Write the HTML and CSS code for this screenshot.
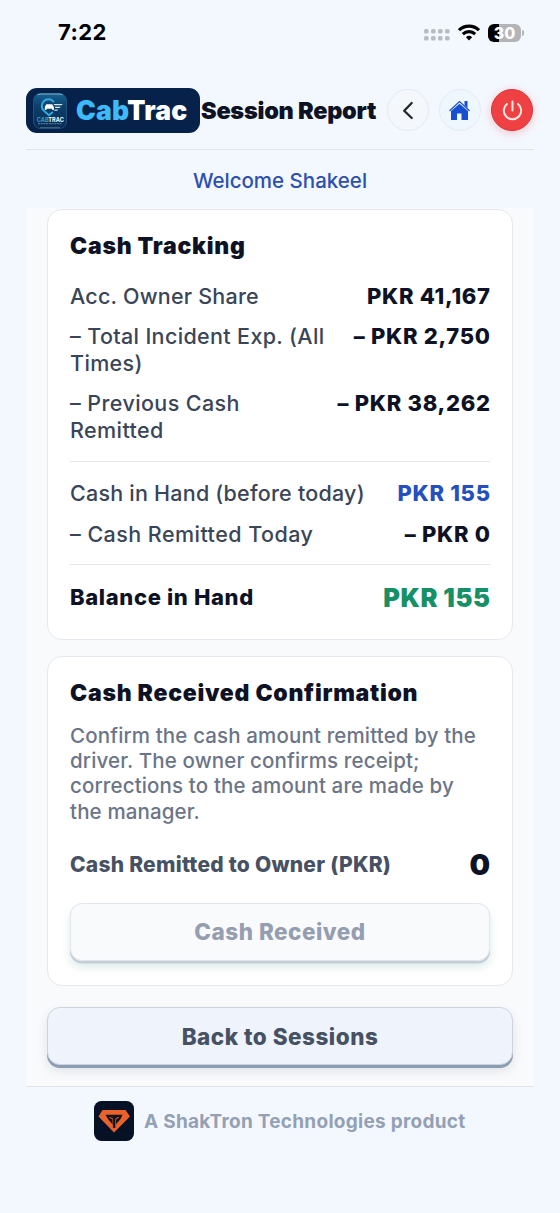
FILE: index.html
```html
<!DOCTYPE html>
<html lang="en">
<head>
<meta charset="utf-8">
<meta name="viewport" content="width=device-width, initial-scale=1">
<title>Session Report</title>
<link rel="stylesheet" href="styles.css">
</head>
<body>
<div class="status">
  <span class="clock">7:22</span>
  <div class="indicators">
    <svg class="dots" width="26" height="13" viewBox="0 0 26 13" fill="#b8bcc1"><rect x="0" y="0" width="4.6" height="4.6" rx="1.6"/><rect x="7" y="0" width="4.6" height="4.6" rx="1.6"/><rect x="14" y="0" width="4.6" height="4.6" rx="1.6"/><rect x="21" y="0" width="4.6" height="4.6" rx="1.6"/><rect x="0" y="7" width="4.6" height="4.6" rx="1.6"/><rect x="7" y="7" width="4.6" height="4.6" rx="1.6"/><rect x="14" y="7" width="4.6" height="4.6" rx="1.6"/><rect x="21" y="7" width="4.6" height="4.6" rx="1.6"/></svg>
    <svg class="wifi" width="22" height="17" viewBox="0 0 22 17" fill="none" stroke="#000" stroke-width="3.1"><path d="M1 6.2a14.3 14.3 0 0 1 20 0"/><path d="M4.8 10.1a8.9 8.9 0 0 1 12.4 0"/><path d="M11 16.4 7.9 13.2a4.5 4.5 0 0 1 6.2 0z" fill="#000" stroke="none"/></svg>
    <div class="battery"><span class="level">30</span></div>
    <span class="nub"></span>
  </div>
</div>
<header class="header">
  <div class="brand">
    <svg class="brand-icon" width="34" height="36" viewBox="0 0 34 36">
      <defs><linearGradient id="tile" x1="0" y1="0" x2="0" y2="1"><stop offset="0" stop-color="#176394"/><stop offset=".35" stop-color="#0b416c"/><stop offset="1" stop-color="#072b52"/></linearGradient></defs>
      <rect x=".5" y=".5" width="33" height="35" rx="7" fill="url(#tile)" stroke="#20517a"/>
      <path d="M4.5 1.900Q6 1 8 1h18q2 0 3.500.9" fill="none" stroke="#7fb0cf"/>
      <path d="M21 9.200A6.700 6.700 0 1 0 11.700 18.500l4.300 3.700 3.800-3.200" fill="none" stroke="#35a9df" stroke-width="2"/>
      <path d="M11.800 17v-3l1.500-2.700h5.800l1.800 2.700v3h-1.700v-1.200h-5.700V17z" fill="#fff"/>
      <path d="M20.500 11h9.300l-1.200 1.300H21.500M22 13.800h5.700l-1.100 1.300h-4.400M21.700 16.500h3.600l-1.200 1.300h-3" fill="#d5e6f2"/>
      <text x="3.800" y="28.800" class="tiny"><tspan fill="#3a9fd2">CAB</tspan><tspan fill="#fff">TRAC</tspan></text>
      <path d="M5 30.700h24" stroke="#7c9eb9" stroke-width=".8" stroke-dasharray="2 .7"/><path d="M7 34.500h20" stroke="#55758f" stroke-width=".7"/>
    </svg>
    <span class="brand-name"><span class="cab">Cab</span>Trac</span>
  </div>
  <h1 class="page-title">Session Report</h1>
  <div class="actions">
    <button class="round" aria-label="Back"><svg width="42" height="42" viewBox="0 0 42 42" fill="none" stroke="#24262e" stroke-width="2.300" stroke-linecap="round" stroke-linejoin="round"><path d="M24.700 14 17.200 21.700 24.700 29"/></svg></button>
    <button class="round home" aria-label="Home"><svg width="42" height="42" viewBox="0 0 42 42"><path d="M12 21.900V31h6v-6.500h4.500V31H29v-9.100L20.500 14.800z" fill="#184fd1"/><path d="M10.900 21.500 20.500 12.500l9.700 9" fill="none" stroke="#184fd1" stroke-width="1.200" stroke-linecap="round"/><path d="M25.500 12h3v7l-3-2.700z" fill="#184fd1"/></svg></button>
    <button class="round power" aria-label="Sign out"><svg width="42" height="42" viewBox="0 0 42 42" fill="none" stroke="#ffe9e2" stroke-width="2" stroke-linecap="round"><path d="M21.500 12.500v9M15.900 14.900a8.700 8.700 0 1 0 11.200 0"/></svg></button>
  </div>
</header>
<p class="welcome">Welcome Shakeel</p>
<main class="content">
  <section class="card tracking">
    <h2 class="card-title">Cash Tracking</h2>
    <div class="row"><span class="label">Acc. Owner Share</span><span class="value">PKR 41,167</span></div>
    <div class="row"><span class="label incident">– Total Incident Exp. (All Times)</span><span class="value">– PKR 2,750</span></div>
    <div class="row"><span class="label previous">– Previous Cash Remitted</span><span class="value">– PKR 38,262</span></div>
    <div class="group">
      <div class="row"><span class="label">Cash in Hand (before today)</span><span class="value blue">PKR 155</span></div>
      <div class="row"><span class="label today">– Cash Remitted Today</span><span class="value">– PKR 0</span></div>
    </div>
    <div class="row balance"><span class="strong-label">Balance in Hand</span><span class="total">PKR 155</span></div>
  </section>
  <section class="card confirmation">
    <h2 class="card-title">Cash Received Confirmation</h2>
    <p class="note">Confirm the cash amount remitted by the<br>driver. The owner confirms receipt;<br>corrections to the amount are made by<br>the manager.</p>
    <div class="row remitted"><span class="remitted-label">Cash Remitted to Owner (PKR)</span><span class="zero">0</span></div>
    <button class="button received" disabled><span>Cash Received</span></button>
  </section>
  <button class="button back"><span>Back to Sessions</span></button>
</main>
<footer class="footer">
  <svg width="40" height="40" viewBox="0 0 40 40"><rect width="40" height="40" rx="7.500" fill="#061126"/><path d="M8.500 9h23l4.500 6.500L20 31.500 4.500 15.500z" fill="#e9622c"/><path d="M11.500 13.700h17L26.500 18l-6.300 7.500L14 18z" fill="#14131c"/><path d="M15.500 16.300 19 18v9.500M24.800 16.300 21.500 18v9" fill="none" stroke="#c9552b" stroke-width="1.100"/><path d="M20.200 16.500V27" stroke="#101323" stroke-width="2"/></svg>
  <span class="credit">A ShakTron Technologies product</span>
</footer>
</body>
</html>
```

FILE: styles.css
```css
* { box-sizing: border-box; }
body { margin: 0; width: 560px; height: 1213px; overflow: hidden; background: #f3f8fe; color: #0e1225; font-family: Inter, "Liberation Sans", sans-serif; padding: 0 26px; }
h1, h2, p { margin: 0; }
button { font-family: inherit; padding: 0; }
svg { display: block; flex: none; }
span { white-space: nowrap; }
.status { height: 76px; padding: 19px 10px 0 32px; display: flex; justify-content: space-between; align-items: flex-start; }
.clock { font-size: 22px; font-weight: 700; line-height: 27px; color: #000; letter-spacing: .4px; }
.indicators { display: flex; align-items: center; height: 27px; }
.dots { margin: 5px 8px 0 0; }
.wifi { margin-right: 8px; }
.battery { width: 33px; height: 18px; border-radius: 6px; background: linear-gradient(90deg, #000 11px, #b2b4b7 11px); text-align: center; }
.level { display: block; font-size: 16px; line-height: 18px; font-weight: 800; color: #fff; }
.nub { width: 2px; height: 6px; margin-left: 1px; border-radius: 0 2px 2px 0; background: #b2b4b7; }
.header { height: 74px; display: flex; align-items: flex-start; padding-top: 12px; border-bottom: 1px solid #dfe5ed; }
.brand { width: 174px; height: 45px; border-radius: 11px; background: #06224b; display: flex; align-items: center; padding-left: 7px; flex: none; }
.brand-icon { margin-right: 9px; }
.tiny { font-size: 5.600px; font-weight: 700; }
.brand-name { color: #fff; font-size: 26.500px; font-weight: 900; line-height: 45px; letter-spacing: .2px; }
.cab { color: #3dbafa; }
.page-title { font-size: 23.500px; font-weight: 900; line-height: 45px; white-space: nowrap; letter-spacing: -.27px; width: 187px; margin-left: 1px; flex: none; }
.actions { display: flex; gap: 10px; margin: 1px 0 0 -1px; }
.round { width: 42px; height: 42px; border: 1.500px solid #e4ebf4; border-radius: 50%; background: #f4f7fc; display: flex; align-items: center; justify-content: center; flex: none; }
.home { background: #eff7fe; }
.power { background: #ef4143; border-color: #d8363b; box-shadow: 0 2px 8px #ef44444d; }
.welcome { height: 58px; line-height: 62px; text-align: center; color: #2d4fad; font-size: 20.500px; font-weight: 500; }
.content { height: 878px; background: #f9fafc; padding: 1px 21px 0; }
.card { background: #fff; border: 1px solid #e5e8ed; border-radius: 15px; padding: 22px 22px 0; }
.tracking { height: 431px; }
.card-title { font-size: 23px; line-height: 28px; font-weight: 900; white-space: nowrap; letter-spacing: .73px; }
.row { display: flex; justify-content: space-between; align-items: flex-start; }
.tracking .row { margin-top: 13px; }
.tracking .card-title + .row { margin-top: 23px; }
.label { font-size: 21.500px; line-height: 27px; font-weight: 500; color: #3a4558; white-space: normal; max-width: 300px; letter-spacing: .22px; }
.incident { max-width: 262px; letter-spacing: .35px; }
.previous { max-width: 190px; letter-spacing: .4px; }
.today { letter-spacing: .45px; }
.value { font-size: 22px; line-height: 27px; font-weight: 800; letter-spacing: .7px; margin-right: -.7px; }
.blue { color: #2450bf; }
.group { margin-top: 17px; padding: 5px 0 16px; border-top: 1px solid #e4e7ec; border-bottom: 1px solid #e4e7ec; }
.tracking .group .row + .row { margin-top: 14px; }
.tracking .balance { margin-top: 18px; }
.strong-label { font-size: 22px; line-height: 29px; font-weight: 800; letter-spacing: .64px; }
.total { font-size: 25.500px; line-height: 29px; font-weight: 900; color: #169067; letter-spacing: .6px; margin-right: -.6px; word-spacing: -.5px; }
.confirmation { height: 330px; margin-top: 16px; }
.note { margin-top: 16px; font-size: 20.500px; line-height: 25.200px; font-weight: 500; color: #6b7587; white-space: nowrap; letter-spacing: .14px; }
.remitted { height: 34px; margin-top: 24px; align-items: center; }
.remitted-label { font-size: 21px; font-weight: 800; color: #465164; letter-spacing: .25px; }
.zero { font-size: 29px; font-weight: 900; }
.button { display: block; width: 100%; height: 58px; border: 1px solid #e2e6eb; border-radius: 12px; font-weight: 800; font-size: 22.500px; letter-spacing: .5px; }
.received { margin-top: 21px; background: #f8fafb; color: #949eb0; box-shadow: 0 2.500px 0 #c4ced8, 0 6px 10px #10806029; }
.back { margin-top: 21px; background: #eff3fc; color: #465164; border-color: #cdd3df; border-radius: 13px; box-shadow: 0 3px 0 #8d9db2, 0 6px 11px #33415520; }
.footer { border-top: 1px solid #e1e5eb; display: flex; padding: 14px 0 0 68px; align-items: center; }
.credit { margin-left: 10px; font-size: 19px; font-weight: 700; color: #94a0b4; letter-spacing: .27px; }
```
